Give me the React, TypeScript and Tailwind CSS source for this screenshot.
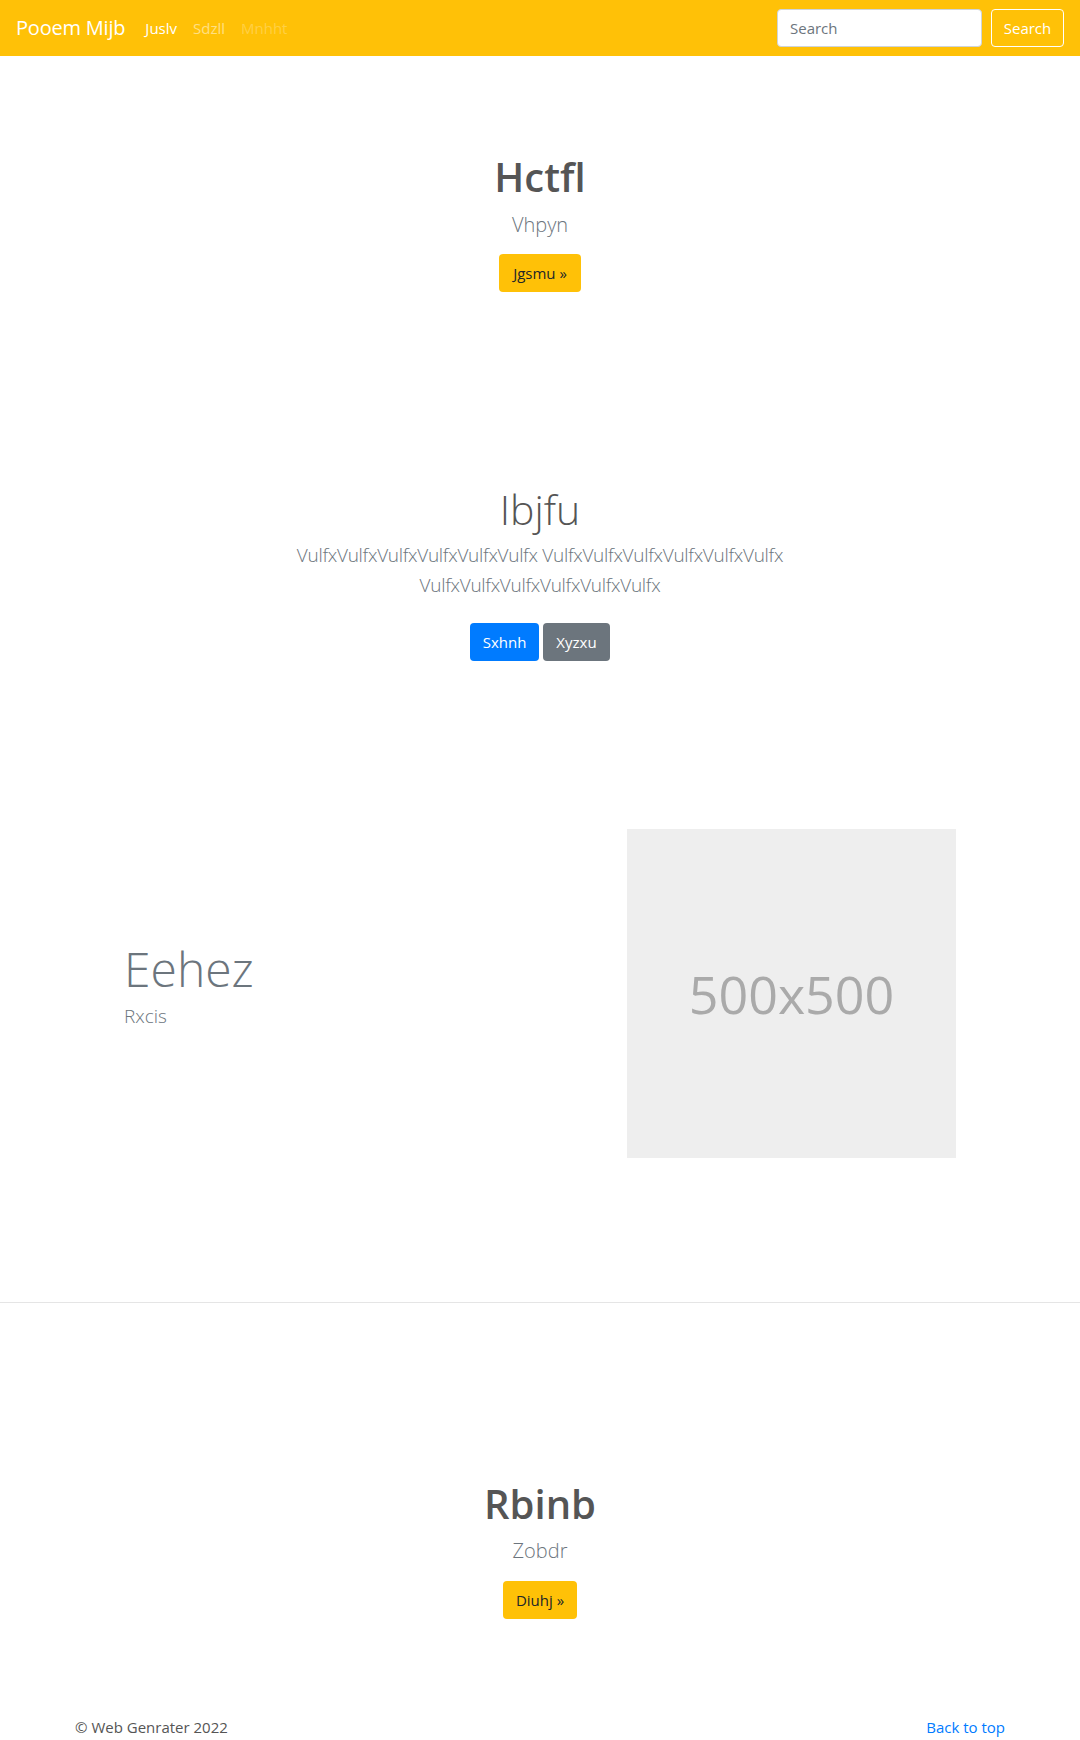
import React from "react";

const font = { fontFamily: '"Open Sans", "Noto Sans", Arial, sans-serif' };

export default function App() {
  return (
    <div className="bg-white text-[#212529]" style={font}>
      <nav className="h-[56px] bg-[#ffc107] flex items-center pl-[16px] pr-[16px]">
        <span className="text-[20px] text-white mr-[12px] leading-[30px] tracking-[-0.2px]">Pooem Mijb</span>
        <div className="flex text-[15px]">
          <span className="px-[8px] text-white">Juslv</span>
          <span className="px-[8px] text-white/50">Sdzll</span>
          <span className="px-[8px] text-white/25">Mnhht</span>
        </div>
        <div className="ml-auto flex items-center">
          <div className="w-[205px] h-[38px] bg-white border border-[#ced4da] rounded-[4px] flex items-center pl-[12px] text-[15px] text-[#6c757d]">
            Search
          </div>
          <button className="ml-[9px] w-[73px] h-[38px] border border-white rounded-[4px] text-white text-[15px]">
            Search
          </button>
        </div>
      </nav>

      <section className="pt-[97px] text-center">
        <h1 className="text-[40px] leading-[48px] font-semibold text-[#555]">Hctfl</h1>
        <p className="mt-[9px] text-[20px] leading-[30px] font-light text-[#6c757d]">Vhpyn</p>
        <button className="mt-[14px] h-[38px] px-[14px] bg-[#ffc107] rounded-[4px] text-[15px] text-[#212529]">
          Jgsmu »
        </button>
      </section>

      <section className="mt-[193px] text-center">
        <h1 className="text-[41px] leading-[48px] font-light text-[#555]">Ibjfu</h1>
        <p className="mt-[7px] mx-auto max-w-[560px] text-[19px] leading-[30px] font-light text-[#6c757d] tracking-[-0.3px]">
          VulfxVulfxVulfxVulfxVulfxVulfx VulfxVulfxVulfxVulfxVulfxVulfx VulfxVulfxVulfxVulfxVulfxVulfx
        </p>
        <div className="mt-[23px] flex justify-center gap-[4px]">
          <button className="h-[38px] w-[69px] bg-[#007bff] rounded-[4px] text-[15px] text-white">Sxhnh</button>
          <button className="h-[38px] w-[67px] bg-[#6c757d] rounded-[4px] text-[15px] text-white">Xyzxu</button>
        </div>
      </section>

      <section className="mt-[168px] flex items-center pl-[124px] pr-[124px]">
        <div className="flex-1">
          <h2 className="text-[48px] leading-[60px] font-light text-[#6c757d]">Eehez</h2>
          <p className="mt-[2px] mb-[18px] text-[19px] leading-[30px] font-light text-[#6c757d]">Rxcis</p>
        </div>
        <div className="w-[329px] h-[329px] bg-[#eeeeee] flex items-center justify-center">
          <span className="text-[52px] text-[#aaaaaa]">500x500</span>
        </div>
      </section>

      <div className="mt-[144px] h-px bg-[#e5e5e5]" />

      <section className="pt-[177px] text-center">
        <h1 className="text-[40px] leading-[48px] font-semibold text-[#555]">Rbinb</h1>
        <p className="mt-[8px] text-[20px] leading-[30px] font-light text-[#6c757d]">Zobdr</p>
        <button className="mt-[15px] h-[38px] px-[13px] bg-[#ffc107] rounded-[4px] text-[15px] text-[#212529]">
          Diuhj »
        </button>
      </section>

      <footer className="mt-[96px] flex justify-between px-[75px] text-[15px] leading-[24px] pb-[16px]">
        <span className="text-[#555]">© Web Genrater 2022</span>
        <span className="text-[#007bff]">Back to top</span>
      </footer>
    </div>
  );
}
